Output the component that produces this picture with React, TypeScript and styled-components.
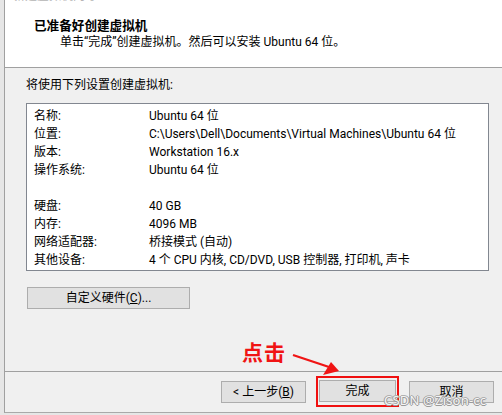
import React from "react";
import styled, { createGlobalStyle } from "styled-components";

const FONT = `Roboto, "Noto Sans CJK SC", sans-serif`;

const Global = createGlobalStyle`
  html, body { margin: 0; padding: 0; background: #ececec; }
  body { font-family: ${FONT}; font-size: 12px; color: #000; }
  * { box-sizing: border-box; }
`;

const Frame = styled.div`
  position: relative;
  width: 502px;
  height: 415px;
  padding-left: 4px;
  background: #e6e6e6;
  overflow: hidden;
`;

const Window = styled.div`
  display: flex;
  flex-direction: column;
  height: 413px;
  border-left: 1px solid #a0a0a0;
  border-bottom: 1px solid #a9a9a9;
  background: #f0f0f0;
`;

const Header = styled.div`
  height: 68px;
  background: #fff;
  border-bottom: 1px solid #a0a0a0;
  display: flex;
  flex-direction: column;
`;

const TitleClip = styled.div`
  height: 3px;
  overflow: hidden;
  margin-left: 8px;
  color: #b4b4b4;
  line-height: 16px;
  & > span { display: block; margin-top: -12px; }
`;

const Title = styled.div`
  margin: 14px 0 0 29px;
  font-weight: 700;
  font-size: 12.6px;
  line-height: 17px;
`;

const Subtitle = styled.div`
  margin-left: 55px;
  line-height: 17px;
`;

const Body = styled.div`
  height: 303px;
  padding: 9px 13px 0 21px;
  display: flex;
  flex-direction: column;
  align-items: flex-start;
`;

const Caption = styled.div`
  line-height: 16px;
`;

const ListBox = styled.div`
  margin-top: 10px;
  width: 463px;
  height: 168px;
  background: #fff;
  border: 1px solid #828790;
  padding: 3px 0 1px 7px;
`;

const Row = styled.div`
  display: flex;
  height: 18px;
  line-height: 18px;
  white-space: nowrap;
`;

const Label = styled.span`
  width: 115px;
  flex: none;
`;

const Button = styled.button<{ $w: number }>`
  width: ${(p) => p.$w}px;
  height: 22px;
  padding: 0;
  background: #e1e1e1;
  border: 1px solid #adadad;
  font-family: ${FONT};
  font-size: 12px;
  line-height: 18px;
  color: #000;
  u { text-decoration: underline; }
`;

const CustomButton = styled(Button)`
  margin: 16px 0 0 1px;
`;

const Footer = styled.div`
  flex: 1;
  border-top: 1px solid #a0a0a0;
  display: flex;
  justify-content: flex-end;
  align-items: center;
  gap: 10px;
  padding: 0 8px 1px 0;
`;

const Highlight = styled.div`
  border: 2px solid #f01010;
  padding: 2px 1px 3px 1px;
  display: flex;
`;

const ClickText = styled.div`
  position: absolute;
  left: 242px;
  top: 337px;
  font-family: "Noto Sans CJK SC", sans-serif;
  font-weight: 700;
  font-size: 21px;
  line-height: 28px;
  color: #f01414;
  letter-spacing: 1px;
`;

const Arrow = styled.svg`
  position: absolute;
  left: 285px;
  top: 348px;
`;

const Watermark = styled.div`
  position: absolute;
  left: 384px;
  top: 392px;
  font-family: "Noto Sans", sans-serif;
  font-size: 13px;
  line-height: 16px;
  color: rgba(255, 255, 255, 0.92);
  text-shadow: 1px 0 0 #9a9a9a, -1px 0 0 #9a9a9a, 0 1px 0 #9a9a9a, 0 -1px 0 #b0b0b0;
  letter-spacing: 0.2px;
`;

const rows: [string, string][] = [
  ["名称:", "Ubuntu 64 位"],
  ["位置:", "C:\\Users\\Dell\\Documents\\Virtual Machines\\Ubuntu 64 位"],
  ["版本:", "Workstation 16.x"],
  ["操作系统:", "Ubuntu 64 位"],
  ["", ""],
  ["硬盘:", "40 GB"],
  ["内存:", "4096 MB"],
  ["网络适配器:", "桥接模式 (自动)"],
  ["其他设备:", "4 个 CPU 内核, CD/DVD, USB 控制器, 打印机, 声卡"],
];

export default function App() {
  return (
    <Frame>
      <Global />
      <Window>
        <Header>
          <TitleClip>
            <span>新建虚拟机向导</span>
          </TitleClip>
          <Title>已准备好创建虚拟机</Title>
          <Subtitle>单击“完成”创建虚拟机。然后可以安装 Ubuntu 64 位。</Subtitle>
        </Header>
        <Body>
          <Caption>将使用下列设置创建虚拟机:</Caption>
          <ListBox>
            {rows.map(([k, v], i) => (
              <Row key={i}>
                <Label>{k}</Label>
                <span>{v}</span>
              </Row>
            ))}
          </ListBox>
          <CustomButton $w={163}>
            自定义硬件(<u>C</u>)...
          </CustomButton>
        </Body>
        <Footer>
          <Button $w={85}>
            &lt; 上一步(<u>B</u>)
          </Button>
          <Highlight>
            <Button $w={77}>完成</Button>
          </Highlight>
          <Button $w={85}>取消</Button>
        </Footer>
      </Window>
      <ClickText>点击</ClickText>
      <Arrow width="60" height="32" viewBox="0 0 60 32">
        <line x1="8" y1="7" x2="44" y2="19" stroke="#f01414" strokeWidth="2.2" />
        <polygon points="38,27 46,14 54,23" fill="#f01414" />
      </Arrow>
      <Watermark>CSDN @Zison-cc</Watermark>
    </Frame>
  );
}
